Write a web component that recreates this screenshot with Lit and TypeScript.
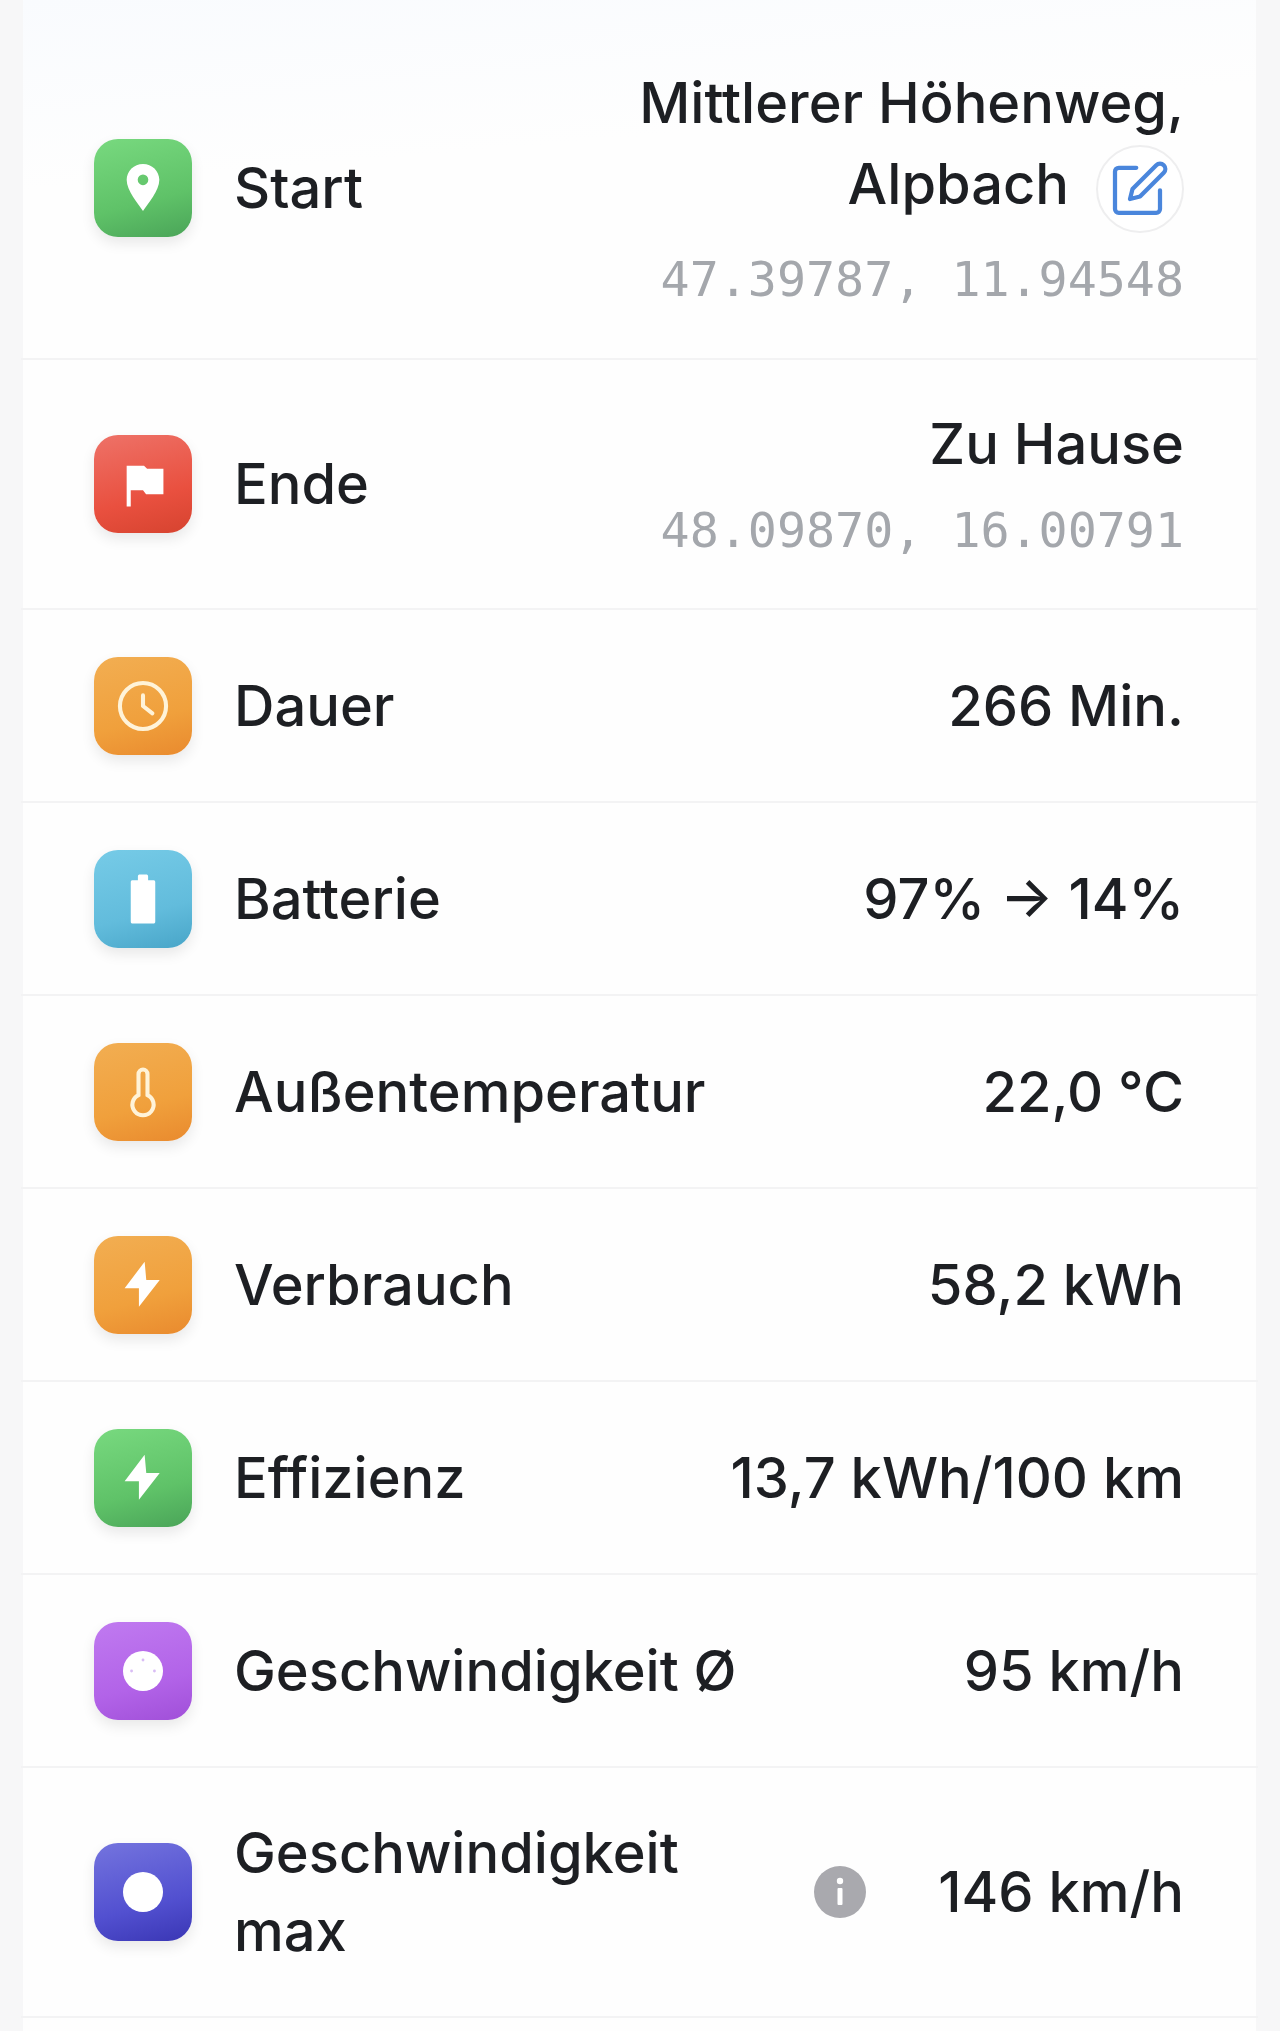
import { LitElement, html, svg, css } from 'lit';
import { customElement } from 'lit/decorators.js';

interface Stat {
  label: string;
  value: string;
  tone: string;
  icon: ReturnType<typeof svg>;
}

const pin = svg`<path fill-rule="evenodd" fill="#fff" d="M24 12.200c-4.400 0-8 3.400-8 7.800 0 5.400 5.600 11.600 8 15.300 2.400-3.700 8-9.900 8-15.300 0-4.400-3.600-7.800-8-7.800zm0 10.400a2.600 2.600 0 1 1 0-5.200 2.600 2.600 0 0 1 0 5.200z"/>`;
const flag = svg`<path fill="#fff" d="M16 15h8.500l1.500 1.500h8V29h-8.500L24 27h-6v8h-2z"/>`;
const clock = svg`<g fill="none" stroke="#fff3d8" stroke-width="2" stroke-linecap="round" stroke-linejoin="round"><circle cx="24" cy="24" r="11.300"/><path d="M24 18.800V24l4.600 3.600"/></g>`;
const battery = svg`<path fill="#fff" d="M21.500 13c0-.7.4-1 1-1h3c.6 0 1 .3 1 1v1.800H29c.7 0 1 .3 1 1V35c0 .7-.3 1-1 1H19c-.7 0-1-.3-1-1V15.800c0-.7.3-1 1-1h2.500z"/>`;
const thermo = svg`<path fill="none" stroke="#fff3d8" stroke-width="2" d="M21.800 15.200a2.200 2.200 0 0 1 4.400 0v10.300a5.200 5.200 0 1 1-4.400 0z"/>`;
const bolt = svg`<path fill="#fff" d="M24.800 12.600 15 25.600h7l0 9 10.200-13.100h-6.600z"/>`;
const gauge = svg`<circle cx="24" cy="24" r="9.800" fill="#fff"/><g fill="#d9bdf5"><circle cx="24" cy="18.600" r=".7"/><circle cx="18.400" cy="24" r=".7"/><circle cx="29.600" cy="24" r=".7"/></g>`;
const dot = svg`<circle cx="24" cy="24" r="9.800" fill="#fff"/>`;

const stats: Stat[] = [
  { label: 'Dauer', value: '266 Min.', tone: 'orange', icon: clock },
  { label: 'Batterie', value: '97% → 14%', tone: 'blue', icon: battery },
  { label: 'Außentemperatur', value: '22,0 °C', tone: 'orange', icon: thermo },
  { label: 'Verbrauch', value: '58,2 kWh', tone: 'orange', icon: bolt },
  { label: 'Effizienz', value: '13,7 kWh/100 km', tone: 'green', icon: bolt },
  { label: 'Geschwindigkeit Ø', value: '95 km/h', tone: 'purple', icon: gauge },
];

@customElement('app-root')
export class AppRoot extends LitElement {
  static override styles = css`
    :host {
      display: block;
      height: 2031px;
      overflow: hidden;
      background: #f7f7f8;
      font-family: Inter, 'Liberation Sans', sans-serif;
      color: #1d1f23;
    }

    .card {
      min-height: 2031px;
      margin: 0 24px 0 23px;
      background: linear-gradient(175deg, #f9fbfe 0, #fefefe 190px, #fefefe 100%);
    }

    .row {
      display: flex;
      align-items: center;
      gap: 42px;
      margin: 0 -2px;
      padding: 47px 74px 46px 73px;
      border-bottom: 2px solid #f3f3f4;
    }

    .row.first {
      padding-top: 63px;
      padding-bottom: 46px;
    }

    .row.end {
      padding-top: 44px;
      padding-bottom: 45px;
    }

    .row.last {
      padding-top: 46px;
      padding-bottom: 46px;
    }

    .tile {
      flex: none;
      width: 98px;
      height: 98px;
      border-radius: 24px;
      box-shadow: 0 6px 14px rgba(0, 0, 0, 0.09);
    }

    .tile svg {
      display: block;
      width: 98px;
      height: 98px;
    }

    .green { background: linear-gradient(165deg, #78d97f 0%, #5fc268 62%, #4aa458 100%); }
    .red { background: linear-gradient(165deg, #ee7268 0%, #e9503f 62%, #d6432f 100%); }
    .orange { background: linear-gradient(165deg, #f2ae52 0%, #f0a03c 62%, #e98a2e 100%); }
    .blue { background: linear-gradient(165deg, #76cbe7 0%, #62bcdc 62%, #48a5c8 100%); }
    .purple { background: linear-gradient(165deg, #c07af0 0%, #b263e8 62%, #a04fd8 100%); }
    .indigo { background: linear-gradient(165deg, #7474de 0%, #5250d0 62%, #3a36b4 100%); }

    .label {
      flex: 1;
      font-size: 56px;
      font-weight: 450;
      line-height: 78px;
    }

    .label.narrow {
      flex: 0 0 470px;
    }

    .value {
      margin-left: auto;
      font-size: 56px;
      font-weight: 450;
      line-height: 78px;
      text-align: right;
      white-space: nowrap;
    }

    .place {
      display: flex;
      flex-direction: column;
      align-items: flex-end;
    }

    .name {
      width: 640px;
      font-size: 56px;
      font-weight: 450;
      line-height: 81px;
      text-align: right;
    }

    .edit {
      display: inline-block;
      box-sizing: border-box;
      width: 88px;
      height: 88px;
      margin: -10px 0 -10px 27px;
      padding: 12px;
      border: 2px solid #eeeeef;
      border-radius: 50%;
      background: #fff;
      vertical-align: middle;
    }

    .edit svg {
      display: block;
      width: 100%;
      height: 100%;
    }

    .coords {
      margin-top: 12px;
      font-family: 'DejaVu Sans Mono', 'Liberation Mono', monospace;
      font-size: 48.300px;
      line-height: 66px;
      color: #a4a7ac;
    }

    .first .coords {
      margin-top: 21px;
    }

    .info {
      flex: none;
      width: 52px;
      height: 52px;
      margin-left: auto;
      margin-right: 30px;
    }

    .info + .value {
      margin-left: 0;
    }
  `;

  private tile(tone: string, icon: ReturnType<typeof svg>) {
    return html`<div class="tile ${tone}"><svg viewBox="0 0 48 48">${icon}</svg></div>`;
  }

  override render() {
    return html`
      <div class="card">
        <div class="row first">
          ${this.tile('green', pin)}
          <div class="label">Start</div>
          <div class="place">
            <div class="name">
              Mittlerer Höhenweg, Alpbach<span class="edit">
                <svg viewBox="0 0 24 24" fill="none" stroke="#4a86dc" stroke-width="1.700" stroke-linecap="round" stroke-linejoin="round">
                  <path d="M10.500 3.500H3.500a1.500 1.500 0 0 0-1.500 1.500v15a1.500 1.500 0 0 0 1.500 1.500h15a1.500 1.500 0 0 0 1.500-1.500v-7.500" />
                  <path d="M18.500 2.500a2.100 2.100 0 0 1 3 3L12 15l-4 1 1-4z" />
                </svg>
              </span>
            </div>
            <div class="coords">47.39787, 11.94548</div>
          </div>
        </div>
        <div class="row end">
          ${this.tile('red', flag)}
          <div class="label">Ende</div>
          <div class="place">
            <div class="name">Zu Hause</div>
            <div class="coords">48.09870, 16.00791</div>
          </div>
        </div>
        ${stats.map(
          (s) => html`
            <div class="row">
              ${this.tile(s.tone, s.icon)}
              <div class="label">${s.label}</div>
              <div class="value">${s.value}</div>
            </div>
          `
        )}
        <div class="row last">
          ${this.tile('indigo', dot)}
          <div class="label narrow">Geschwindigkeit max</div>
          <svg class="info" viewBox="0 0 52 52">
            <circle cx="26" cy="26" r="26" fill="#a9a9ae" />
            <rect x="23.500" y="22" width="5" height="17" rx="1" fill="#fff" />
            <circle cx="26" cy="15" r="3.200" fill="#fff" />
          </svg>
          <div class="value">146 km/h</div>
        </div>
      </div>
    `;
  }
}
